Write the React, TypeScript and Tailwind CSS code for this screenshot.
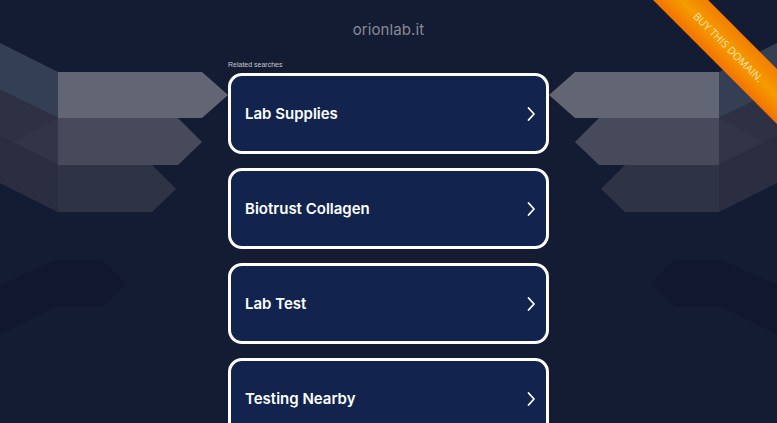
import React from "react";

const searches = ["Lab Supplies", "Biotrust Collagen", "Lab Test", "Testing Nearby"];

function Ribbons() {
  return (
    <g>
      {/* tails */}
      <polygon points="58,72 0,43 0,90 58,118" fill="#353f53" />
      <polygon points="0,90 58,118 58,165 0,137" fill="#2d3143" />
      <polygon points="13,142 58,118 58,165" fill="#323547" />
      <polygon points="58,165 0,137 0,183 58,212" fill="#2a2e40" />
      {/* arrows */}
      <polygon points="58,72 202,72 228,95 202,118 58,118" fill="#626574" />
      <polygon points="58,118 178,118 202,142 178,165 58,165" fill="#474a5a" />
      <polygon points="58,165 152,165 176,189 152,212 58,212" fill="#2e3346" />
      {/* lower dark arrow */}
      <polygon points="0,285 56,260 102,260 126,283 102,307 56,307 0,335" fill="#11172e" />
    </g>
  );
}

function Backdrop() {
  return (
    <svg className="absolute inset-0" width="777" height="423" viewBox="0 0 777 423">
      <Ribbons />
      <g transform="translate(777,0) scale(-1,1)">
        <Ribbons />
      </g>
    </svg>
  );
}

function Chevron() {
  return (
    <svg width="10" height="16" viewBox="0 0 10 16" fill="none">
      <polyline points="2.5,2 8,8 2.5,14" stroke="white" strokeWidth="1.8" strokeLinecap="round" strokeLinejoin="round" />
    </svg>
  );
}

export default function App() {
  return (
    <div className="relative h-[423px] w-full overflow-hidden bg-[#141c34] font-['Liberation_Sans',Arial,sans-serif]">
      <Backdrop />

      <div className="relative flex flex-col items-center pt-[20px]">
        <h1 className="font-['Inter',sans-serif] text-[15px] leading-[20px] tracking-[0.1px] text-[#878a95]">
          orionlab.it
        </h1>
        <div className="mt-[20px] w-[321px]">
          <p className="mb-[4px] text-[7px] leading-[9px] text-[#c3c6cf]">Related searches</p>
          <div className="flex flex-col gap-[14px]">
            {searches.map((s) => (
              <a
                key={s}
                href="#"
                className="flex h-[81px] items-center justify-between rounded-[14px] border-[3px] border-white bg-[#12244d] pl-[14px] pr-[10px]"
              >
                <span className="mt-[1px] font-['Inter',sans-serif] text-[15px] font-semibold text-white">{s}</span>
                <Chevron />
              </a>
            ))}
          </div>
        </div>
      </div>

      <div className="absolute right-0 top-0 h-[124px] w-[124px] overflow-hidden">
        <div className="absolute left-[-25px] top-[28px] flex h-[39px] w-[200px] rotate-45 items-center justify-center bg-[linear-gradient(180deg,#f37d00_0%,#f59c00_50%,#f37300_100%)]">
          <span className="font-['Open_Sans',sans-serif] text-[10.5px] leading-none text-[#fde3b8]">BUY THIS DOMAIN.</span>
        </div>
      </div>
    </div>
  );
}
